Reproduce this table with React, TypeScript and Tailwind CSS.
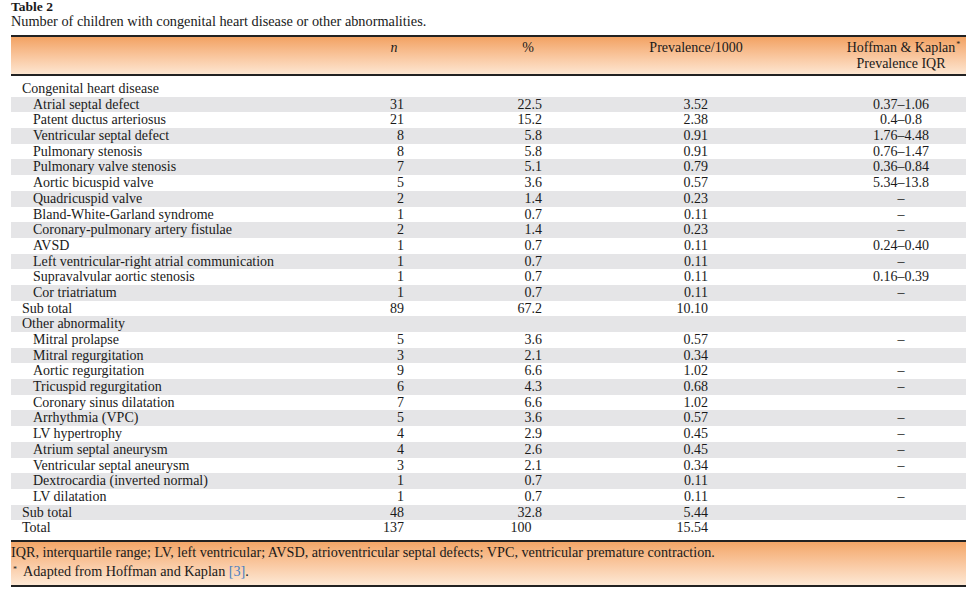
import React from "react"

type Row = {
  label: string
  n?: string
  pct?: string
  prev?: string
  iqr?: string
  kind: "section" | "item" | "total"
}

const rows: Row[] = [
  { label: "Congenital heart disease", kind: "section" },
  { label: "Atrial septal defect", n: "31", pct: "22.5", prev: "3.52", iqr: "0.37–1.06", kind: "item" },
  { label: "Patent ductus arteriosus", n: "21", pct: "15.2", prev: "2.38", iqr: "0.4–0.8", kind: "item" },
  { label: "Ventricular septal defect", n: "8", pct: "5.8", prev: "0.91", iqr: "1.76–4.48", kind: "item" },
  { label: "Pulmonary stenosis", n: "8", pct: "5.8", prev: "0.91", iqr: "0.76–1.47", kind: "item" },
  { label: "Pulmonary valve stenosis", n: "7", pct: "5.1", prev: "0.79", iqr: "0.36–0.84", kind: "item" },
  { label: "Aortic bicuspid valve", n: "5", pct: "3.6", prev: "0.57", iqr: "5.34–13.8", kind: "item" },
  { label: "Quadricuspid valve", n: "2", pct: "1.4", prev: "0.23", iqr: "–", kind: "item" },
  { label: "Bland-White-Garland syndrome", n: "1", pct: "0.7", prev: "0.11", iqr: "–", kind: "item" },
  { label: "Coronary-pulmonary artery fistulae", n: "2", pct: "1.4", prev: "0.23", iqr: "–", kind: "item" },
  { label: "AVSD", n: "1", pct: "0.7", prev: "0.11", iqr: "0.24–0.40", kind: "item" },
  { label: "Left ventricular-right atrial communication", n: "1", pct: "0.7", prev: "0.11", iqr: "–", kind: "item" },
  { label: "Supravalvular aortic stenosis", n: "1", pct: "0.7", prev: "0.11", iqr: "0.16–0.39", kind: "item" },
  { label: "Cor triatriatum", n: "1", pct: "0.7", prev: "0.11", iqr: "–", kind: "item" },
  { label: "Sub total", n: "89", pct: "67.2", prev: "10.10", kind: "total" },
  { label: "Other abnormality", kind: "section" },
  { label: "Mitral prolapse", n: "5", pct: "3.6", prev: "0.57", iqr: "–", kind: "item" },
  { label: "Mitral regurgitation", n: "3", pct: "2.1", prev: "0.34", kind: "item" },
  { label: "Aortic regurgitation", n: "9", pct: "6.6", prev: "1.02", iqr: "–", kind: "item" },
  { label: "Tricuspid regurgitation", n: "6", pct: "4.3", prev: "0.68", iqr: "–", kind: "item" },
  { label: "Coronary sinus dilatation", n: "7", pct: "6.6", prev: "1.02", kind: "item" },
  { label: "Arrhythmia (VPC)", n: "5", pct: "3.6", prev: "0.57", iqr: "–", kind: "item" },
  { label: "LV hypertrophy", n: "4", pct: "2.9", prev: "0.45", iqr: "–", kind: "item" },
  { label: "Atrium septal aneurysm", n: "4", pct: "2.6", prev: "0.45", iqr: "–", kind: "item" },
  { label: "Ventricular septal aneurysm", n: "3", pct: "2.1", prev: "0.34", iqr: "–", kind: "item" },
  { label: "Dextrocardia (inverted normal)", n: "1", pct: "0.7", prev: "0.11", kind: "item" },
  { label: "LV dilatation", n: "1", pct: "0.7", prev: "0.11", iqr: "–", kind: "item" },
  { label: "Sub total", n: "48", pct: "32.8", prev: "5.44", kind: "total" },
  { label: "Total", n: "137", pct: "100", prev: "15.54", kind: "total" },
]

function Pct({ value }: { value?: string }) {
  if (!value) return null
  // keep the decimal points in one column
  return (
    <>
      {value}
      {!value.includes(".") && <span className="invisible">.0</span>}
    </>
  )
}

export default function App() {
  return (
    <div className="min-h-[596px] w-[980px] bg-white px-[11px] font-['Liberation_Serif',serif] text-[#1a1a1a]">
      <div className="h-[35px]">
        <p className="text-[13.5px] font-bold leading-[14px]">Table 2</p>
        <p className="text-[14.3px] leading-[15px]">Number of children with congenital heart disease or other abnormalities.</p>
      </div>

      <div className="w-[955px]">
        <div className="grid h-[41px] grid-cols-[343px_80px_54px_80px_48px_160px_60px_130px] border-y-2 border-[#222] bg-gradient-to-b from-[#f2a262] to-[#fde6d1] pt-[3px] text-[14px] leading-[16px]">
          <div />
          <div className="text-center italic">n</div>
          <div />
          <div className="text-center">%</div>
          <div />
          <div className="text-center">Prevalence/1000</div>
          <div />
          <div className="text-center">
            <div className="relative inline-block">
              Hoffman &amp; Kaplan
              <span className="absolute -right-[5px] -top-[3px] text-[8px]">*</span>
            </div>
            <div>Prevalence IQR</div>
          </div>
        </div>

        <div className="pt-[5px] text-[14px]">
          {rows.map((row, i) => (
            <div
              key={i}
              className={`grid h-[15.7px] grid-cols-[300px_93px_138px_166px_128px_130px] leading-[15.7px] ${
                i % 2 === 1 ? "bg-[#e5e5e7]" : ""
              }`}
            >
              <div className={row.kind === "item" ? "pl-[22px]" : "pl-[11px]"}>{row.label}</div>
              <div className="text-right">{row.n}</div>
              <div className="text-right">
                <Pct value={row.pct} />
              </div>
              <div className="text-right">{row.prev}</div>
              <div />
              <div className="text-center">{row.iqr}</div>
            </div>
          ))}
        </div>

        <div className="mt-[4px] h-[47px] border-y-2 border-[#222] bg-gradient-to-b from-[#f3a667] to-[#fde8d5] pt-[1px] text-[14.2px] leading-[19px]">
          <p>IQR, interquartile range; LV, left ventricular; AVSD, atrioventricular septal defects; VPC, ventricular premature contraction.</p>
          <p className="pl-[2px]">
            <span className="relative -top-[4px] text-[8px]">*</span>
            <span className="pl-[6px]">Adapted from Hoffman and Kaplan </span>
            <span className="text-[#4a7fc1]">[3]</span>.
          </p>
        </div>
      </div>
    </div>
  )
}
